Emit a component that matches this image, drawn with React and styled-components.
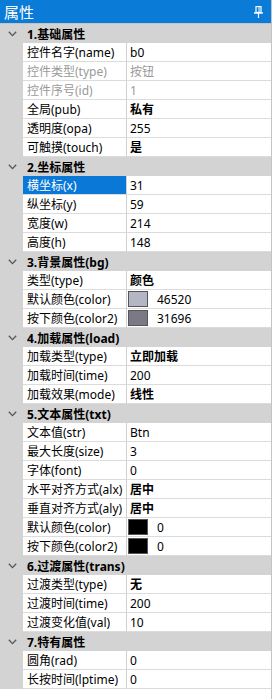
import React from 'react';
import styled, { createGlobalStyle } from 'styled-components';

const Global = createGlobalStyle`
  html, body { margin: 0; padding: 0; background: #ffffff; }
  body { font-family: "Noto Sans", "Noto Sans CJK SC", sans-serif; font-size: 12px; color: #000; }
`;

const Panel = styled.div`
  width: 272px;
  box-sizing: border-box;
  border-right: 1px solid #c4c4c4;
  display: flex;
  flex-direction: column;
`;

const TitleBar = styled.div`
  height: 23px;
  background: #0a7bd6;
  color: #fff;
  display: flex;
  align-items: center;
  justify-content: space-between;
  padding: 0 8px 0 4px;
  font-size: 15px;
  border-bottom: 1px solid #c4c4c4;
`;

const GroupHeader = styled.div`
  height: 19px;
  box-sizing: border-box;
  background: #d3d3d3;
  display: flex;
  align-items: center;
  font-weight: bold;
  font-size: 12px;
`;

const Chevron = styled.span`
  width: 27px;
  display: flex;
  justify-content: center;
  padding-right: 3px;
  box-sizing: border-box;
`;

const Row = styled.div`
  height: 19px;
  display: grid;
  grid-template-columns: 23px 104px 1fr;
  background: #d3d3d3;
`;

const Name = styled.div`
  box-sizing: border-box;
  background: ${p => (p.$selected ? '#0a78d7' : '#ffffff')};
  color: ${p => (p.$selected ? '#ffffff' : p.$disabled ? '#9a9a9a' : '#000')};
  border-bottom: 1px solid #dcdcdc;
  border-right: 1px solid #d0d0d0;
  padding-left: 4px;
  display: flex;
  align-items: center;
  white-space: nowrap;
  overflow: hidden;
`;

const Value = styled.div`
  box-sizing: border-box;
  background: #ffffff;
  color: ${p => (p.$disabled ? '#9a9a9a' : '#000')};
  font-weight: ${p => (p.$bold ? 'bold' : 'normal')};
  border-bottom: 1px solid #dcdcdc;
  padding-left: 3px;
  display: flex;
  align-items: center;
  gap: 9px;
  white-space: nowrap;
`;

const Swatch = styled.span`
  width: 20px;
  height: 16px;
  box-sizing: border-box;
  border: 1px solid #555;
  background: ${p => p.$color};
  margin-left: -2px;
`;

const BottomSpace = styled.div`
  height: 10px;
  background: #fff;
`;

const groups = [
  { title: '1.基础属性', rows: [
    { n: '控件名字(name)', v: 'b0' },
    { n: '控件类型(type)', v: '按钮', d: true },
    { n: '控件序号(id)', v: '1', d: true },
    { n: '全局(pub)', v: '私有', b: true },
    { n: '透明度(opa)', v: '255' },
    { n: '可触摸(touch)', v: '是', b: true },
  ] },
  { title: '2.坐标属性', rows: [
    { n: '横坐标(x)', v: '31', s: true },
    { n: '纵坐标(y)', v: '59' },
    { n: '宽度(w)', v: '214' },
    { n: '高度(h)', v: '148' },
  ] },
  { title: '3.背景属性(bg)', rows: [
    { n: '类型(type)', v: '颜色', b: true },
    { n: '默认颜色(color)', v: '46520', c: '#b5b6c5' },
    { n: '按下颜色(color2)', v: '31696', c: '#7b7985' },
  ] },
  { title: '4.加载属性(load)', rows: [
    { n: '加载类型(type)', v: '立即加载', b: true },
    { n: '加载时间(time)', v: '200' },
    { n: '加载效果(mode)', v: '线性', b: true },
  ] },
  { title: '5.文本属性(txt)', rows: [
    { n: '文本值(str)', v: 'Btn' },
    { n: '最大长度(size)', v: '3' },
    { n: '字体(font)', v: '0' },
    { n: '水平对齐方式(alx)', v: '居中', b: true },
    { n: '垂直对齐方式(aly)', v: '居中', b: true },
    { n: '默认颜色(color)', v: '0', c: '#000000' },
    { n: '按下颜色(color2)', v: '0', c: '#000000' },
  ] },
  { title: '6.过渡属性(trans)', rows: [
    { n: '过渡类型(type)', v: '无', b: true },
    { n: '过渡时间(time)', v: '200' },
    { n: '过渡变化值(val)', v: '10' },
  ] },
  { title: '7.特有属性', rows: [
    { n: '圆角(rad)', v: '0' },
    { n: '长按时间(lptime)', v: '0' },
  ] },
];

const PinIcon = () => (
  <svg width="9" height="12" viewBox="0 0 9 12">
    <rect x="2" y="0.5" width="5" height="6" fill="none" stroke="#fff" strokeWidth="1.2" />
    <line x1="5" y1="1" x2="5" y2="6" stroke="#fff" strokeWidth="1" />
    <line x1="0" y1="7" x2="9" y2="7" stroke="#fff" strokeWidth="1.4" />
    <line x1="4.5" y1="7" x2="4.5" y2="12" stroke="#fff" strokeWidth="1.2" />
  </svg>
);

const ChevronIcon = () => (
  <svg width="9" height="6" viewBox="0 0 9 6">
    <polyline points="0.8,0.8 4.5,4.6 8.2,0.8" fill="none" stroke="#555" strokeWidth="1.3" />
  </svg>
);

export default function App() {
  return (
    <>
      <Global />
      <Panel>
        <TitleBar>
          <span>属性</span>
          <PinIcon />
        </TitleBar>
        {groups.map(g => (
          <React.Fragment key={g.title}>
            <GroupHeader>
              <Chevron><ChevronIcon /></Chevron>
              {g.title}
            </GroupHeader>
            {g.rows.map(r => (
              <Row key={r.n}>
                <span />
                <Name $selected={r.s} $disabled={r.d}>{r.n}</Name>
                <Value $bold={r.b} $disabled={r.d}>
                  {r.c && <Swatch $color={r.c} />}
                  {r.v}
                </Value>
              </Row>
            ))}
          </React.Fragment>
        ))}
        <BottomSpace />
      </Panel>
    </>
  );
}
